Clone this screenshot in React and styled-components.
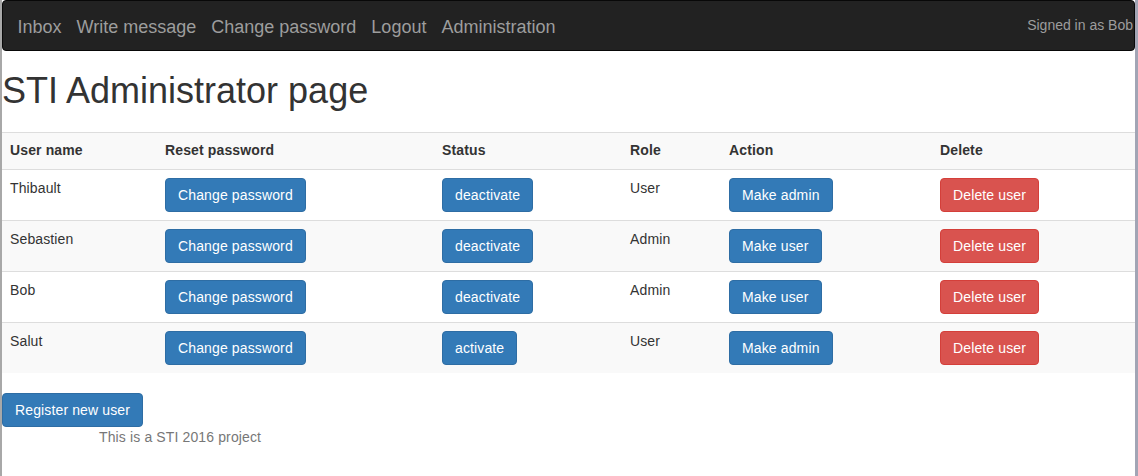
import React from 'react'
import styled, { createGlobalStyle } from 'styled-components'

const GlobalStyle = createGlobalStyle`
  html, body {
    margin: 0;
    padding: 0;
    background: #fff;
  }
  body {
    font-family: "Liberation Sans", Arial, Helvetica, sans-serif;
    font-size: 14px;
    line-height: 20px;
    letter-spacing: 0.13px;
    color: #333;
  }
  * {
    box-sizing: border-box;
  }
`

const Frame = styled.div`
  min-height: 100vh;
  border-left: 2px solid #a8a8a8;
  border-right: 3px solid #a2a5b5;
`

const Navbar = styled.nav`
  display: flex;
  align-items: flex-start;
  justify-content: space-between;
  height: 51px;
  padding: 0 1px 0 7px;
  background: #222;
  border: 1px solid #080808;
  border-radius: 4px;
`

const NavLinks = styled.div`
  display: flex;
`

const NavLink = styled.a`
  display: block;
  padding: 16px 7.5px 0;
  font-size: 18px;
  line-height: 20px;
  letter-spacing: 0;
  color: #9d9d9d;
  text-decoration: none;
  cursor: pointer;
`

const NavText = styled.p`
  margin: 0;
  padding-top: 14px;
  font-size: 14px;
  line-height: 20px;
  letter-spacing: 0;
  color: #9d9d9d;
`

const Title = styled.h1`
  margin: 20px 0 0;
  font-size: 36px;
  line-height: 40px;
  font-weight: 500;
  letter-spacing: 0;
  color: #333;
`

const Table = styled.table`
  width: 100%;
  margin: 21px 0 20px;
  border-collapse: collapse;
  border-spacing: 0;
  table-layout: fixed;
`

const Row = styled.tr`
  background: ${(p) => (p.$striped ? '#f9f9f9' : '#fff')};
`

const HeadCell = styled.th`
  padding: 7px 8px 9px;
  text-align: left;
  font-weight: bold;
  vertical-align: top;
  border-top: 1px solid #ddd;
`

const Cell = styled.td`
  padding: 8px;
  vertical-align: top;
  border-top: 1px solid #ddd;
`

const Button = styled.button`
  display: inline-block;
  margin: 0;
  padding: 6px 12px;
  font-family: inherit;
  font-size: 14px;
  line-height: 20px;
  letter-spacing: 0.13px;
  color: #fff;
  background: ${(p) => (p.$danger ? '#d9534f' : '#337ab7')};
  border: 1px solid ${(p) => (p.$danger ? '#d43f3a' : '#2e6da4')};
  border-radius: 4px;
  white-space: nowrap;
  cursor: pointer;
`

const Footer = styled.p`
  margin: 0;
  padding-left: 97px;
  color: #777;
`

const users = [
  { name: 'Thibault', active: true, role: 'User' },
  { name: 'Sebastien', active: true, role: 'Admin' },
  { name: 'Bob', active: true, role: 'Admin' },
  { name: 'Salut', active: false, role: 'User' },
]

const columns = [
  ['User name', 155],
  ['Reset password', 277],
  ['Status', 188],
  ['Role', 99],
  ['Action', 211],
  ['Delete', 203],
]

export default function App() {
  return (
    <>
      <GlobalStyle />
      <Frame>
        <Navbar>
          <NavLinks>
            <NavLink>Inbox</NavLink>
            <NavLink>Write message</NavLink>
            <NavLink>Change password</NavLink>
            <NavLink>Logout</NavLink>
            <NavLink>Administration</NavLink>
          </NavLinks>
          <NavText>Signed in as Bob</NavText>
        </Navbar>

        <Title>STI Administrator page</Title>

        <Table>
          <colgroup>
            {columns.map(([label, w]) => (
              <col key={label} style={{ width: w }} />
            ))}
          </colgroup>
          <thead>
            <Row $striped>
              {columns.map(([label]) => (
                <HeadCell key={label}>{label}</HeadCell>
              ))}
            </Row>
          </thead>
          <tbody>
            {users.map((u, i) => (
              <Row key={u.name} $striped={i % 2 === 1}>
                <Cell>{u.name}</Cell>
                <Cell>
                  <Button>Change password</Button>
                </Cell>
                <Cell>
                  <Button>{u.active ? 'deactivate' : 'activate'}</Button>
                </Cell>
                <Cell>{u.role}</Cell>
                <Cell>
                  <Button>{u.role === 'Admin' ? 'Make user' : 'Make admin'}</Button>
                </Cell>
                <Cell>
                  <Button $danger>Delete user</Button>
                </Cell>
              </Row>
            ))}
          </tbody>
        </Table>

        <Button>Register new user</Button>
        <Footer>This is a STI 2016 project</Footer>
      </Frame>
    </>
  )
}
